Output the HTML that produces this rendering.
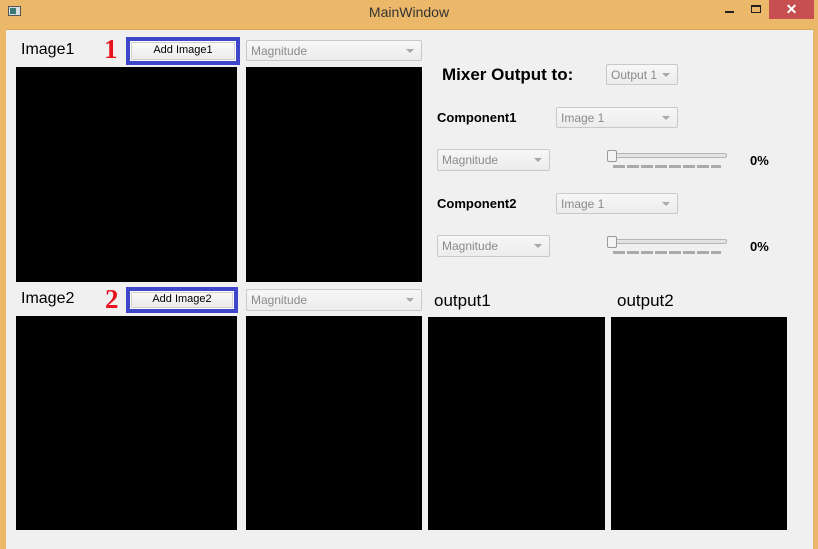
<!DOCTYPE html>
<html><head><style>
*{margin:0;padding:0;box-sizing:border-box}
body{width:818px;height:538px;background:#ebb869;position:relative;overflow:hidden;font-family:"Liberation Sans",sans-serif}
.a{position:absolute}
.client{left:6px;top:29px;width:807px;height:520px;background:#f0f0f0;border-top:1px solid #d9a75a}
.blk{position:absolute;background:#000}
.lbl{position:absolute;font-size:16px;color:#000}
.cb{position:absolute;border:1px solid #c9c9c9;border-radius:2px;background:linear-gradient(#f7f7f7,#ececec);font-size:12px;color:#8a8a8a;padding-left:4px;display:flex;align-items:center}
.cb:after{content:"";position:absolute;right:7px;top:50%;margin-top:-2px;border-left:4px solid transparent;border-right:4px solid transparent;border-top:4px solid #a8a8a8}
.btnw{position:absolute;border:4px solid #3e47c9;background:#fff}
.btnw div{position:absolute;left:1px;top:1px;right:1px;bottom:1px;border:1px solid #d0d0d0;background:linear-gradient(#fafafa,#ececec);font-size:11px;text-align:center;line-height:15px}
.num{position:absolute;font-family:"Liberation Serif",serif;font-weight:bold;color:#e8141e;font-size:27px}
.b{position:absolute;font-weight:bold;font-size:13px}
.groove{position:absolute;height:5px;border:1px solid #b5b5b5;border-radius:2px;background:#e3e3e3}
.handle{position:absolute;width:10px;height:12px;border:1px solid #999;border-radius:2px;background:#f4f4f4}
.ticks{position:absolute;height:3px;background:repeating-linear-gradient(90deg,#aaa 0 12px,transparent 12px 14px)}
</style></head><body>
<div class="a" style="left:8px;top:6px;width:13px;height:10px;border:1px solid #555;background:#d8dde0"><div style="position:absolute;left:1px;top:1px;width:6px;height:6px;background:#3a7a76"></div></div>
<div class="a" style="left:0;top:4px;width:818px;text-align:center;font-size:14px;color:#333">MainWindow</div>
<div class="a" style="left:725px;top:11px;width:9px;height:2px;background:#222"></div>
<div class="a" style="left:751px;top:5px;width:10px;height:8px;border:1px solid #222;border-top-width:2px"></div>
<div class="a" style="left:769px;top:0;width:45px;height:19px;background:#c74f4f;color:#fff;text-align:center;font-size:14px;line-height:19px;font-weight:bold">✕</div>
<div class="a client"></div>

<div class="lbl" style="left:21px;top:41px">Image1</div>
<div class="num" style="left:104px;top:34px">1</div>
<div class="btnw" style="left:126px;top:37px;width:114px;height:28px"><div>Add Image1</div></div>
<div class="cb" style="left:246px;top:40px;width:176px;height:21px">Magnitude</div>
<div class="blk" style="left:16px;top:67px;width:221px;height:215px"></div>
<div class="blk" style="left:246px;top:67px;width:176px;height:215px"></div>

<div class="a" style="left:442px;top:65px;font-size:17px;font-weight:bold">Mixer Output to:</div>
<div class="cb" style="left:606px;top:64px;width:72px;height:21px">Output 1</div>
<div class="b" style="left:437px;top:110px">Component1</div>
<div class="cb" style="left:556px;top:107px;width:122px;height:21px">Image 1</div>
<div class="cb" style="left:437px;top:149px;width:113px;height:22px">Magnitude</div>
<div class="groove" style="left:607px;top:153px;width:120px"></div>
<div class="handle" style="left:607px;top:150px"></div>
<div class="ticks" style="left:613px;top:165px;width:108px"></div>
<div class="b" style="left:750px;top:153px">0%</div>

<div class="b" style="left:437px;top:196px">Component2</div>
<div class="cb" style="left:556px;top:193px;width:122px;height:21px">Image 1</div>
<div class="cb" style="left:437px;top:235px;width:113px;height:22px">Magnitude</div>
<div class="groove" style="left:607px;top:239px;width:120px"></div>
<div class="handle" style="left:607px;top:236px"></div>
<div class="ticks" style="left:613px;top:251px;width:108px"></div>
<div class="b" style="left:750px;top:239px">0%</div>

<div class="lbl" style="left:21px;top:290px">Image2</div>
<div class="num" style="left:105px;top:284px">2</div>
<div class="btnw" style="left:126px;top:287px;width:112px;height:26px"><div style="line-height:13px">Add Image2</div></div>
<div class="cb" style="left:246px;top:289px;width:176px;height:22px">Magnitude</div>
<div class="lbl" style="left:434px;top:291px;font-size:17px">output1</div>
<div class="lbl" style="left:617px;top:291px;font-size:17px">output2</div>
<div class="blk" style="left:16px;top:316px;width:221px;height:214px"></div>
<div class="blk" style="left:246px;top:316px;width:176px;height:214px"></div>
<div class="blk" style="left:428px;top:317px;width:177px;height:213px"></div>
<div class="blk" style="left:611px;top:317px;width:176px;height:213px"></div>
</body></html>
